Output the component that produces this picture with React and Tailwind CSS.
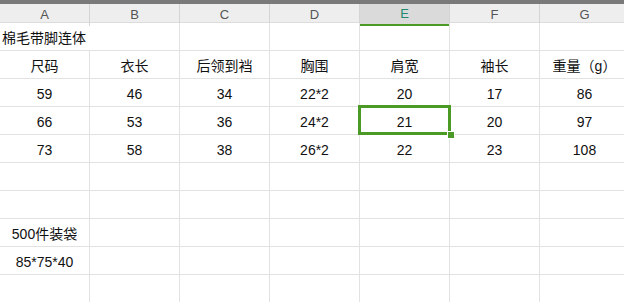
const cols = ["A", "B", "C", "D", "E", "F", "G"];

const rows = [
  { title: "棉毛带脚连体" },
  { cells: ["尺码", "衣长", "后领到裆", "胸围", "肩宽", "袖长", "重量（g）"] },
  { cells: ["59", "46", "34", "22*2", "20", "17", "86"] },
  { cells: ["66", "53", "36", "24*2", "21", "20", "97"] },
  { cells: ["73", "58", "38", "26*2", "22", "23", "108"] },
  { cells: [] },
  { cells: [] },
  { cells: ["500件装袋"] },
  { cells: ["85*75*40"] },
  { cells: [] },
];

const App = () => {
  return (
    <div
      className="relative w-[624px] h-[302px] overflow-hidden bg-white text-[14px] text-[#111]"
      style={{ fontFamily: '"Liberation Sans", "Noto Sans CJK SC", sans-serif' }}
    >
      <div className="h-[4px] bg-[#7a7a7a]" />
      <div className="grid grid-cols-[repeat(7,90px)] h-[19px] bg-[#eeeeee] border-b border-[#dcdcdc]">
        {cols.map((c) => (
          <div
            key={c}
            className={
              c === "E"
                ? "flex items-center justify-center bg-[#dadada] border-r border-[#d4d4d4] border-b-2 border-b-[#4b9a26] text-[13px] text-[#1f8a70]"
                : "flex items-center justify-center border-r border-[#d4d4d4] text-[13px] text-[#555]"
            }
          >
            {c}
          </div>
        ))}
      </div>

      {rows.map((r, i) => (
        <div key={i} className="grid grid-cols-[repeat(7,90px)] h-[28px] border-b border-[#e2e2e2]">
          {r.title ? (
            <>
              <div className="flex items-center pl-[2px] pt-[3px] whitespace-nowrap">{r.title}</div>
              {cols.slice(1).map((c) => (
                <div key={c} className="border-r border-[#e2e2e2]" />
              ))}
            </>
          ) : (
            cols.map((c, j) => (
              <div
                key={c}
                className="flex items-center justify-center pt-[3px] border-r border-[#e2e2e2] whitespace-nowrap"
              >
                {r.cells[j] || ""}
              </div>
            ))
          )}
        </div>
      ))}

      {/* selected cell E4 */}
      <div className="absolute left-[358px] top-[105px] w-[93px] h-[30px] border-[3px] border-[#4b9a26]" />
      <div className="absolute left-[447px] top-[131px] w-[6px] h-[6px] bg-[#4b9a26] border border-white box-content" />
    </div>
  );
};

export default App;
